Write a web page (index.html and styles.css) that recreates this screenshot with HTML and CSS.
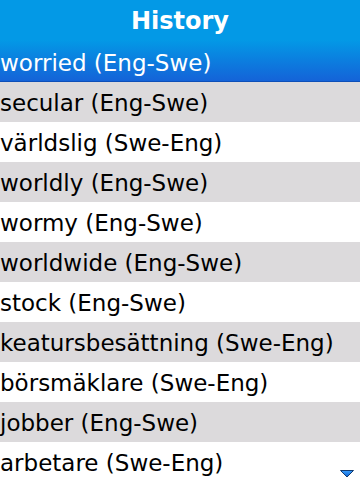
FILE: index.html
```html
<!DOCTYPE html>
<html lang="en">
<head>
    <meta charset="UTF-8">
    <meta name="viewport" content="width=device-width, initial-scale=1.0">
    <title>History</title>
    <link rel="stylesheet" href="styles.css">
</head>
<body>
    <h1 class="title">History</h1>
    <ul class="history">
        <li class="item selected">worried (Eng-Swe)</li>
        <li class="item">secular (Eng-Swe)</li>
        <li class="item">världslig (Swe-Eng)</li>
        <li class="item">worldly (Eng-Swe)</li>
        <li class="item">wormy (Eng-Swe)</li>
        <li class="item">worldwide (Eng-Swe)</li>
        <li class="item">stock (Eng-Swe)</li>
        <li class="item">keatursbesättning (Swe-Eng)</li>
        <li class="item">börsmäklare (Swe-Eng)</li>
        <li class="item">jobber (Eng-Swe)</li>
        <li class="item">arbetare (Swe-Eng)</li>
    </ul>
    <svg class="more" width="14" height="8" viewBox="0 0 14 8">
        <defs>
            <linearGradient id="arrow" x1="0" y1="0" x2="0" y2="1">
                <stop offset="0" stop-color="#3aa0ff"/>
                <stop offset="1" stop-color="#0a5fd0"/>
            </linearGradient>
        </defs>
        <polygon points="0.5,0.5 13.5,0.5 7,7" fill="url(#arrow)" stroke="#123a70" stroke-width="1"/>
    </svg>
</body>
</html>
```

FILE: styles.css
```css
html, body {
    margin: 0;
    padding: 0;
    height: 480px;
    overflow: hidden;
}
body {
    font-family: "DejaVu Sans", sans-serif;
    background-color: white;
    position: relative;
}
.title {
    margin: 0;
    height: 42px;
    line-height: 42px;
    text-align: center;
    font-size: 24px;
    font-weight: bold;
    color: white;
    background-color: #0399e6;
}
.history {
    list-style: none;
    margin: 0;
    padding: 0;
}
.item {
    height: 38px;
    padding-top: 2px;
    line-height: 38px;
    font-size: 23px;
    color: black;
    white-space: nowrap;
}
.item:nth-child(even) {
    background-color: #dcdadc;
}
.selected {
    color: white;
    height: 37px;
    margin-top: -2px;
    padding-top: 4px;
    background: linear-gradient(#0399e6, #1463d8);
    border-bottom: 1px solid #0d4fb8;
}
.more {
    position: absolute;
    right: 6px;
    bottom: 2px;
}
```
